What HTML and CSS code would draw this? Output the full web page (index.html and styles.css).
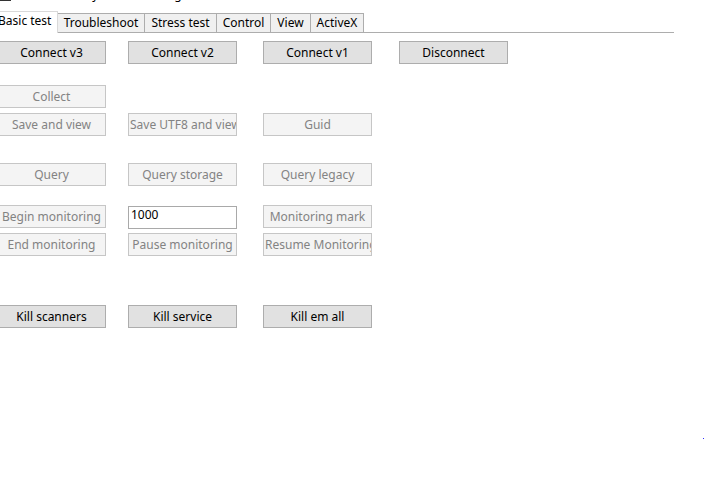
FILE: index.html
```html
<!DOCTYPE html>
<html>
<head>
<meta charset="utf-8">
<link rel="stylesheet" href="styles.css">
</head>
<body>
<div class="form">
  <div class="topcheck"><span class="cb"></span><span class="cbtext">Ask before any action and log</span></div>
  <div class="tabs">
    <div class="tab selected w-basic">Basic test</div>
    <div class="tab w-trouble">Troubleshoot</div>
    <div class="tab w-stress">Stress test</div>
    <div class="tab w-control">Control</div>
    <div class="tab w-view">View</div>
    <div class="tab w-activex">ActiveX</div>
  </div>
  <div class="panel">
    <div class="row m8">
      <button class="btn">Connect v3</button>
      <button class="btn">Connect v2</button>
      <button class="btn">Connect v1</button>
      <button class="btn">Disconnect</button>
    </div>
    <div class="row m21">
      <button class="btn off">Collect</button>
    </div>
    <div class="row m5">
      <button class="btn off">Save and view</button>
      <button class="btn off clip">Save UTF8 and view</button>
      <button class="btn off">Guid</button>
    </div>
    <div class="row m27">
      <button class="btn off">Query</button>
      <button class="btn off">Query storage</button>
      <button class="btn off">Query legacy</button>
    </div>
    <div class="row m19">
      <button class="btn off">Begin monitoring</button>
      <div class="textbox">1000</div>
      <button class="btn off">Monitoring mark</button>
    </div>
    <div class="row m5">
      <button class="btn off">End monitoring</button>
      <button class="btn off">Pause monitoring</button>
      <button class="btn off clip">Resume Monitoring</button>
    </div>
    <div class="row m49">
      <button class="btn">Kill scanners</button>
      <button class="btn">Kill service</button>
      <button class="btn">Kill em all</button>
    </div>
  </div>
  <div class="dot"></div>
</div>
</body>
</html>
```

FILE: styles.css
```css
html, body {
  margin: 0;
  padding: 0;
  background: #ffffff;
  overflow: hidden;
}
body {
  width: 704px;
  height: 487px;
  font-family: "Noto Sans", "Liberation Sans", sans-serif;
  font-size: 12px;
  color: #000;
}
.form {
  position: relative;
  width: 704px;
  height: 487px;
}
.topcheck {
  display: flex;
  align-items: flex-end;
  height: 15px;
  margin-top: -13px;
  margin-left: -2px;
  line-height: 15px;
}
.cb {
  width: 11px;
  height: 11px;
  border: 1px solid #333;
  background: #fff;
  margin-bottom: 1px;
}
.cbtext {
  margin-left: 4px;
  white-space: nowrap;
}
.tabs {
  display: flex;
  align-items: flex-end;
  margin-top: 9px;
  margin-left: -2px;
  width: 676px;
  height: 21px;
  border-bottom: 1px solid #adadad;
}
.tab {
  box-sizing: border-box;
  height: 19px;
  border: 1px solid #adadad;
  border-bottom: none;
  background: #f0f0f0;
  margin-left: -1px;
  text-align: center;
  line-height: 17px;
  white-space: nowrap;
}
.tab:first-child { margin-left: 0; }
.tab.selected {
  height: 22px;
  margin-bottom: -1px;
  background: #fff;
  border-color: #d9d9d9;
  position: relative;
  z-index: 1;
  line-height: 18px;
  text-align: left;
  padding-left: 0;
  text-indent: -1px;
  overflow: hidden;
}
.w-basic { width: 60px; }
.w-trouble { width: 88px; }
.w-stress { width: 73px; }
.w-control { width: 55px; }
.w-view { width: 41px; }
.w-activex { width: 54px; }
.panel {
  margin-left: -3px;
  display: flex;
  flex-direction: column;
}
.row {
  display: grid;
  grid-template-columns: 131px 135px 136px 109px;
  height: 23px;
}
.m8 { margin-top: 8px; }
.m21 { margin-top: 21px; }
.m5 { margin-top: 5px; }
.m27 { margin-top: 27px; }
.m19 { margin-top: 19px; }
.m49 { margin-top: 49px; }
.btn {
  box-sizing: border-box;
  width: 109px;
  height: 23px;
  margin: 0;
  padding: 0;
  border: 1px solid #adadad;
  background: #e1e1e1;
  color: #000;
  font-family: inherit;
  font-size: 12px;
  line-height: 20px;
  text-align: center;
  white-space: nowrap;
  overflow: hidden;
}
.btn.off {
  background: #f4f4f4;
  border-color: #c6c6c6;
  color: #838383;
}
.btn.clip {
  text-align: left;
  padding-left: 1px;
}
.textbox {
  box-sizing: border-box;
  width: 109px;
  height: 23px;
  margin-top: 1px;
  border: 1px solid #a9a9a9;
  background: #fff;
  padding-left: 2px;
  line-height: 16px;
}
.dot {
  position: absolute;
  left: 703px;
  top: 451px;
  width: 1px;
  height: 1px;
  background: #2f2fff;
}
```
